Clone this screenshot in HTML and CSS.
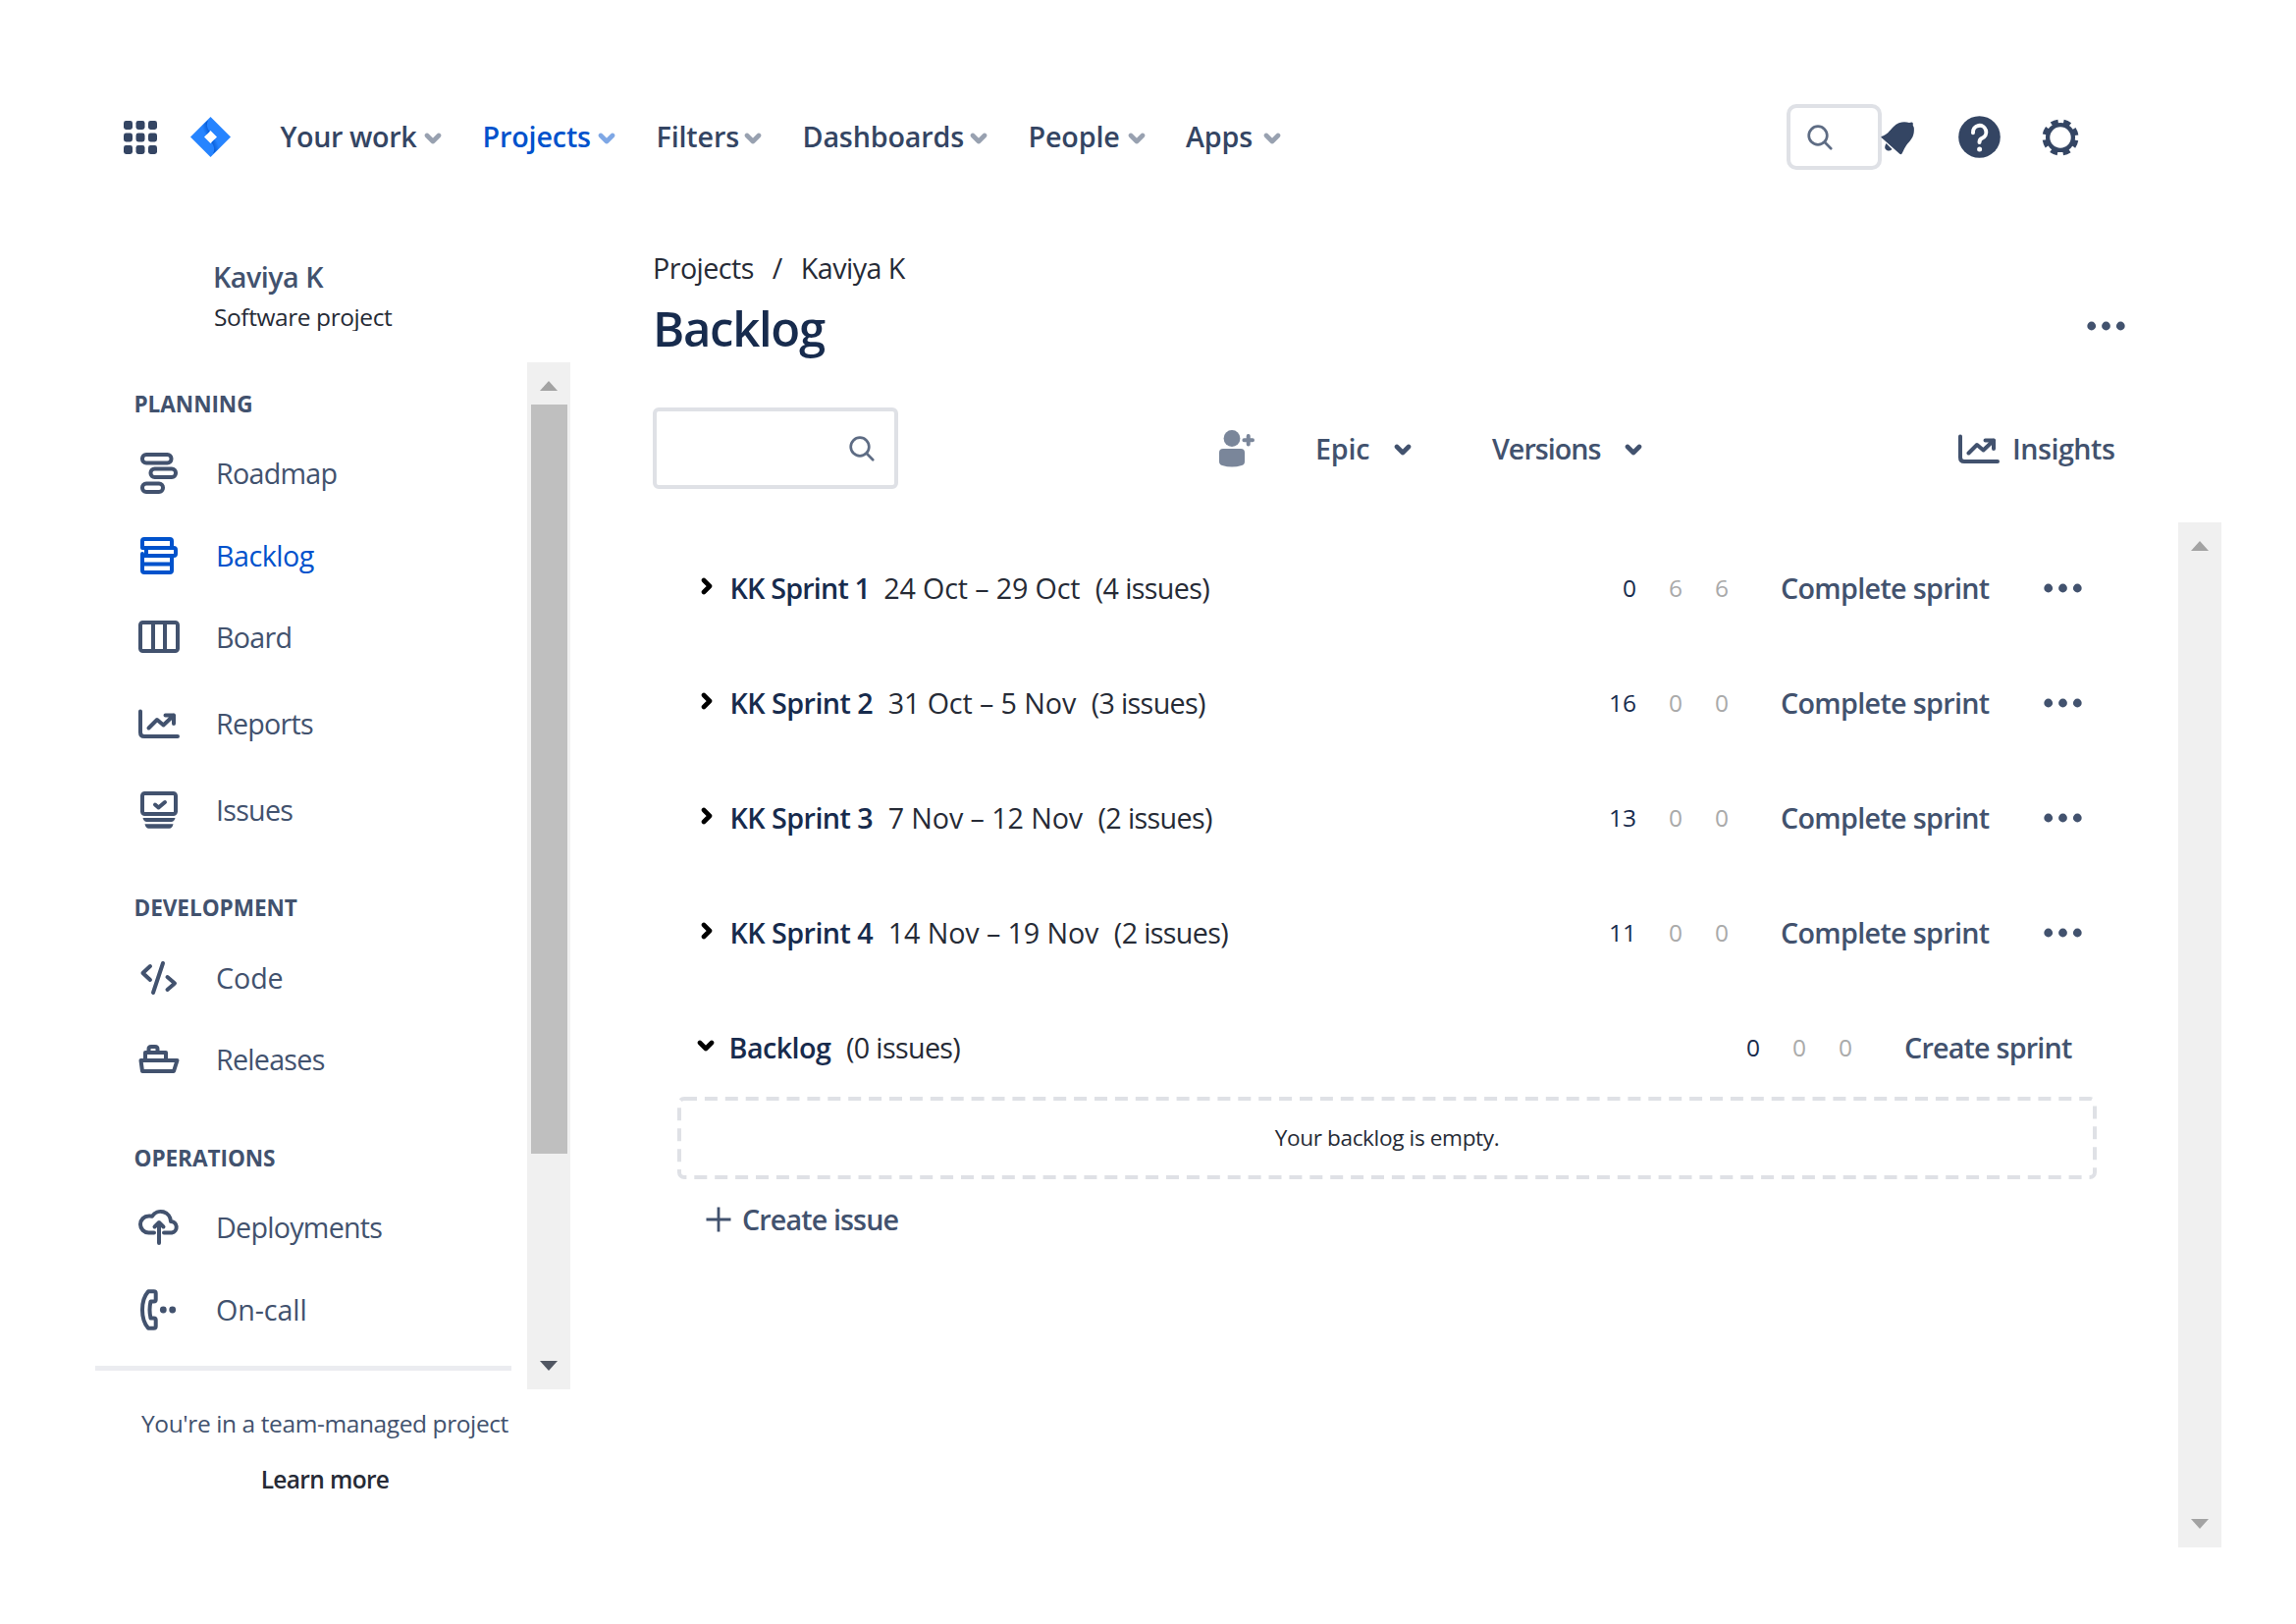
FILE: index.html
```html
<!DOCTYPE html>
<html lang="en">
<head>
<meta charset="utf-8">
<title>Backlog</title>
<link rel="stylesheet" href="styles.css">
</head>
<body>
<svg class="defs" width="0" height="0" aria-hidden="true">
  <symbol id="down" viewBox="0 0 18 12"><path d="M3 3l6 6 6-6"/></symbol>
  <symbol id="right" viewBox="0 0 12 18"><path d="M3 3l6 6-6 6"/></symbol>
  <symbol id="lens" viewBox="0 0 26 26"><circle cx="11" cy="11" r="9.3"/><path d="M17.8 17.8l6.4 6.4"/></symbol>
  <symbol id="chart" viewBox="0 0 42 42"><path d="M2 8.5V30q0 4 4 4h34M10.5 25.5L19 17l6.5 5.5L36 12.5M27.5 12.5H36V21"/></symbol>
  <symbol id="dots" viewBox="0 0 39 10"><circle cx="4.7" cy="5" r="4.4"/><circle cx="19.5" cy="5" r="4.4"/><circle cx="34.3" cy="5" r="4.4"/></symbol>
</svg>

<header class="topbar">
  <svg class="switcher" viewBox="0 0 34 34"><g id="r"><rect width="9" height="9" rx="2.4"/><rect x="12.5" width="9" height="9" rx="2.4"/><rect x="25" width="9" height="9" rx="2.4"/></g><use href="#r" y="12.5"/><use href="#r" y="25"/></svg>
  <svg class="logo" viewBox="0 0 41 41">
    <defs><linearGradient id="g" x1="1" y1="0.2" x2="0.1" y2="0.7"><stop offset="0.1" stop-color="#0052cc"/><stop offset="0.9" stop-color="#2684ff"/></linearGradient></defs>
    <path fill="#2684ff" fill-rule="evenodd" d="M20.5 0L41 20.5 20.5 41 0 20.5zM20.5 14L14 20.5l6.5 6.5 6.5-6.5z"/>
    <path id="f" fill="url(#g)" d="M18 3.500Q15 9 19.500 15L16.500 18 11 12.500Q11 9 18 3.500z"/>
    <use href="#f" transform="rotate(180 20.500 20.500)"/>
  </svg>
  <nav class="menu">
    <a class="menu-item first"><span>Your work</span><svg class="chev"><use href="#down"/></svg></a>
    <a class="menu-item current"><span>Projects</span><svg class="chev"><use href="#down"/></svg></a>
    <a class="menu-item"><span>Filters</span><svg class="chev"><use href="#down"/></svg></a>
    <a class="menu-item"><span>Dashboards</span><svg class="chev"><use href="#down"/></svg></a>
    <a class="menu-item"><span>People</span><svg class="chev"><use href="#down"/></svg></a>
    <a class="menu-item"><span>Apps</span><svg class="chev"><use href="#down"/></svg></a>
  </nav>
  <div class="top-search"><svg class="lens"><use href="#lens"/></svg></div>
  <svg class="bell" viewBox="0 0 42 42"><path d="M4.500 20C11 18 12 15 17 10C22 4.500 29 4.500 33 6L35.500 5.500Q37.300 5.500 36.700 8.500L37.800 11C38.500 19 35.500 22.500 32.500 26C28.500 30.500 28 33 25.500 37.500Q24.500 39 23 37.500L4.500 21zM9.500 27Q6.500 32 10 34Q13 35.500 15.500 33z"/></svg>
  <svg class="help" viewBox="0 0 43 43"><circle cx="21.500" cy="21.500" r="21.300"/><path d="M15 17.200A6.700 6.700 0 1 1 24 22.800Q21.500 24 21.500 27"/><circle class="pt" cx="21.600" cy="34" r="2.500"/></svg>
  <svg class="gear" viewBox="0 0 38 38"><circle cx="19" cy="19" r="12.900" stroke-width="4.300"/><circle cx="19" cy="19" r="16.400" stroke-width="4.200" stroke-dasharray="7.200 5.680" transform="rotate(9.900 19 19)"/></svg>
</header>

<div class="page">
  <aside class="sidebar">
    <div class="project"><div class="project-name">Kaviya K</div><div class="project-type">Software project</div></div>
    <div class="side-scroll">
      <div class="side-list">
        <h2 class="group">PLANNING</h2>
        <a class="item"><svg viewBox="0 0 42 42"><rect x="4" y="2" width="29.500" height="8.500" rx="4"/><rect x="12.500" y="16.500" width="25.500" height="8.500" rx="4"/><rect x="4" y="31.500" width="21" height="8.500" rx="4"/></svg><span>Roadmap</span></a>
        <a class="item active"><svg viewBox="0 0 42 42"><path d="M8 13H4V6q0-2 2-2h26q2 0 2 2v7"/><rect x="8" y="13" width="30" height="8" rx="2"/><path d="M4 19v17q0 2 2 2h26q2 0 2-2V21M4 21h4M4 29.500h30"/></svg><span>Backlog</span></a>
        <a class="item"><svg viewBox="0 0 42 42"><rect x="2" y="6" width="38" height="29" rx="2.500"/><path d="M15 6v29M27 6v29"/></svg><span>Board</span></a>
        <a class="item low"><svg><use href="#chart"/></svg><span>Reports</span></a>
        <a class="item low"><svg viewBox="0 0 42 42"><rect x="4" y="4" width="34" height="21" rx="2.500"/><path d="M17 15.500l3.500 3L27 13"/><path class="solid" d="M4.500 29h33q-1 4-4 4h-25q-3 0-4-4zM6.500 35.300h29q-1 4.400-4 4.400h-21q-3 0-4-4.400z"/></svg><span>Issues</span></a>
        <h2 class="group">DEVELOPMENT</h2>
        <a class="item wide"><svg viewBox="0 0 42 42"><path d="M12 9l-7.500 7 7.500 7M25 6L15 36M29.500 20l7.500 6.500-7.500 6.500"/></svg><span>Code</span></a>
        <a class="item"><svg viewBox="0 0 42 42"><path d="M2.500 22h37L36 33H4zM7 21v-7h21v7M10.500 13v-2.500q0-2.500 2.500-2.500h4q2.500 0 2.500 2.500V13"/></svg><span>Releases</span></a>
        <h2 class="group">OPERATIONS</h2>
        <a class="item"><svg viewBox="0 0 42 42"><path d="M16 26.500h-5.500A8.500 8.500 0 0 1 10.500 9.500Q12.500 9.300 14 9.700A10.300 10.300 0 0 1 33 15A5.800 5.800 0 0 1 34 26.500h-8M21 37V16.500M16.500 20.500L21 16l4.500 4.500"/></svg><span>Deployments</span></a>
        <a class="item wide"><svg viewBox="0 0 42 42"><path d="M10 2.300h5.700q2 0 2 2V10.500q0 2-2 2H12.500q-2 8.500 0 17h3.200q2 0 2 2v6.200q0 2-2 2H10Q4 33 4 21T10 2.300z"/><circle class="solid" cx="25.300" cy="21" r="3.400"/><circle class="solid" cx="34.700" cy="21" r="3.400"/></svg><span>On-call</span></a>
        <div class="rule"></div>
      </div>
      <div class="scrollbar"><i class="up"></i><i class="thumb"></i><i class="dn dark"></i></div>
    </div>
    <div class="side-foot"><div class="managed">You're in a team-managed project</div><div class="learn">Learn more</div></div>
  </aside>

  <main class="main">
    <div class="crumbs"><span>Projects</span><span>/</span><span>Kaviya K</span></div>
    <div class="title-row"><h1>Backlog</h1><svg class="dots"><use href="#dots"/></svg></div>
    <div class="toolbar">
      <div class="search"><svg class="lens"><use href="#lens"/></svg></div>
      <svg class="person" viewBox="0 0 37 38"><circle cx="13" cy="8.500" r="8.400"/><path d="M4 19h18q4 0 4 4v9q0 3-3 4-10 3-20 0-3-1-3-4v-9q0-4 4-4z"/><path class="plus" d="M29.700 6v8.600M25.400 10.300H34"/></svg>
      <a class="filter epic"><span>Epic</span><svg class="chev"><use href="#down"/></svg></a>
      <a class="filter versions"><span>Versions</span><svg class="chev"><use href="#down"/></svg></a>
      <a class="insights"><svg><use href="#chart"/></svg><span>Insights</span></a>
    </div>
    <div class="board">
      <div class="lists">
        <section class="sprint"><svg class="fold"><use href="#right"/></svg><b>KK Sprint 1</b><span class="date">24 Oct – 29 Oct</span><span class="count">(4 issues)</span><div class="nums"><em>0</em><i>6</i><i>6</i></div><a class="act">Complete sprint</a><svg class="dots"><use href="#dots"/></svg></section>
        <section class="sprint"><svg class="fold"><use href="#right"/></svg><b>KK Sprint 2</b><span class="date">31 Oct – 5 Nov</span><span class="count">(3 issues)</span><div class="nums"><em>16</em><i>0</i><i>0</i></div><a class="act">Complete sprint</a><svg class="dots"><use href="#dots"/></svg></section>
        <section class="sprint"><svg class="fold"><use href="#right"/></svg><b>KK Sprint 3</b><span class="date">7 Nov – 12 Nov</span><span class="count">(2 issues)</span><div class="nums"><em>13</em><i>0</i><i>0</i></div><a class="act">Complete sprint</a><svg class="dots"><use href="#dots"/></svg></section>
        <section class="sprint"><svg class="fold"><use href="#right"/></svg><b>KK Sprint 4</b><span class="date">14 Nov – 19 Nov</span><span class="count">(2 issues)</span><div class="nums"><em>11</em><i>0</i><i>0</i></div><a class="act">Complete sprint</a><svg class="dots"><use href="#dots"/></svg></section>
        <section class="sprint last"><svg class="fold open"><use href="#down"/></svg><b>Backlog</b><span class="count">(0 issues)</span><div class="nums"><em>0</em><i>0</i><i>0</i></div><a class="act create">Create sprint</a></section>
        <div class="empty"><svg class="dash"><rect x="2" y="2" width="1442" height="80" rx="5"/></svg><span>Your backlog is empty.</span></div>
        <a class="new"><svg viewBox="0 0 26 26"><path d="M13 .5v25M.5 13h25"/></svg><span>Create issue</span></a>
      </div>
      <div class="scrollbar"><i class="up"></i><i class="dn"></i></div>
    </div>
  </main>
</div>
</body>
</html>
```
FILE: styles.css
```css
* { box-sizing: border-box; }
body { margin: 0; width: 2339px; height: 1654px; overflow: hidden; background: #fff; color: #262b36; font-family: "Open Sans", "Noto Sans", sans-serif; font-size: 28.7px; line-height: 40px; }
h1, h2 { margin: 0; }
i, em { font-style: normal; }
svg { display: block; flex: none; overflow: visible; }
.defs { position: absolute; }
a, b { white-space: nowrap; font-weight: 600; }

/* top navigation */
.topbar { display: flex; align-items: center; height: 173px; padding: 106px 0 0 126px; color: #344563; fill: #344563; }
.switcher { width: 34px; height: 34px; }
.logo { width: 41px; height: 41px; margin-left: 33.5px; }
.menu { display: grid; grid-template-columns: 164.5px 135.5px 107.5px 188.5px 119px 96.5px; gap: 41.5px; width: 1022px; margin: -2px 0 0 51px; letter-spacing: -.15px; }
.menu-item { display: flex; align-items: center; justify-content: space-between; }
.menu-item.first { letter-spacing: -.4px; }
.chev { width: 18px; height: 12px; fill: none; stroke: currentColor; stroke-width: 4.6; stroke-linecap: round; stroke-linejoin: round; }
.menu-item .chev { opacity: .5; margin-top: 4px; }
.menu-item.current { color: #0052cc; }
.top-search { width: 97px; height: 67px; border: 4.2px solid #dfe1e6; border-radius: 10px; margin-left: 512.5px; padding: 17px 0 0 17px; }
.lens { width: 26px; height: 26px; fill: none; stroke: #5e6c84; stroke-width: 2.7; stroke-linecap: round; }
.bell { width: 42px; height: 42px; margin-left: -5px; }
.help { width: 43px; height: 43px; margin-left: 41px; }
.help path { fill: none; stroke: #fff; stroke-width: 4; stroke-linecap: round; }
.help .pt { fill: #fff; }
.gear { width: 38px; height: 38px; margin-left: 42px; fill: none; stroke: #344563; }

/* project sidebar */
.page { display: flex; height: 1481px; }
.sidebar { width: 581px; color: #42526e; }
.project { height: 196px; padding: 89px 0 0 217px; }
.project-name { font-weight: 600; letter-spacing: -.5px; }
.project-type { height: 30.5px; margin-top: 4.5px; padding-left: 1px; overflow: hidden; font-size: 24.5px; line-height: 32px; letter-spacing: -.42px; color: #262b36; }
.side-scroll { display: flex; height: 1046px; }
.side-list { width: 537px; padding-top: 26.5px; }
.group { padding-left: 136.5px; margin-bottom: 13px; font-size: 22.6px; font-weight: 700; line-height: 32px; letter-spacing: -.07px; }
.item + .group { margin-top: 42.5px; }
.item { display: flex; align-items: center; height: 83.6px; padding-left: 141px; gap: 37px; font-weight: 400; letter-spacing: -.75px; }
.item.low { margin-top: 4px; }
.item.wide { letter-spacing: -.1px; }
.item svg, .insights svg { width: 42px; height: 42px; fill: none; stroke: currentColor; stroke-width: 4; stroke-linecap: round; stroke-linejoin: round; }
.item .solid { fill: currentColor; stroke: none; }
.item.active { color: #0052cc; letter-spacing: -.5px; }
.rule { width: 424px; height: 5px; margin: 15px 0 0 97px; background: #ebecf0; }
.scrollbar { display: flex; flex-direction: column; align-items: center; width: 44px; background: #f0f0f0; }
.up, .dn { border: 9px solid transparent; border-top-width: 0; border-bottom: 10px solid #a3a3a3; margin: 19px 0 14px; }
.dn { transform: rotate(180deg); margin: auto 0 19px; }
.dark { border-bottom-color: #505662; }
.thumb { width: 37px; height: 763px; background: #bfbfbf; }
.side-foot { padding: 18.5px 0 0 81px; text-align: center; font-size: 24.5px; line-height: 32px; letter-spacing: -.4px; }
.learn { margin-top: 25px; font-weight: 600; letter-spacing: -.65px; color: #262b36; }

/* backlog page */
.main { width: 1682px; padding: 80px 0 0 84px; }
.crumbs { display: flex; gap: 19px; letter-spacing: -.55px; }
.title-row { display: flex; align-items: center; height: 64px; margin-top: 9px; }
h1 { width: 1461px; font-size: 49px; font-weight: 600; line-height: 64px; letter-spacing: -1.3px; color: #172b4d; }
.title-row .dots { margin-top: -5px; }
.dots { width: 39px; height: 10px; fill: #42526e; }
.toolbar { display: flex; align-items: center; height: 83px; margin-top: 49px; color: #42526e; }
.search { width: 250px; height: 83px; border: 4px solid #dfe1e6; border-radius: 6px; padding: 25px 0 0 196px; }
.person { width: 37px; height: 38px; margin-left: 327px; fill: #7a869a; }
.plus { stroke: #7a869a; stroke-width: 4; stroke-linecap: round; }
.filter { display: flex; align-items: center; justify-content: space-between; height: 40px; }
.filter .chev { margin-top: 3px; }
.epic { width: 98px; margin-left: 61px; letter-spacing: -.2px; }
.versions { width: 153px; margin-left: 82px; letter-spacing: -1px; }
.insights { display: flex; align-items: center; gap: 13px; margin-left: 322px; letter-spacing: -.5px; }
.board { display: flex; height: 1044px; margin-top: 33.5px; }
.lists { width: 1446px; margin: 0 83px 0 25px; padding-top: 32px; }
.sprint { display: flex; align-items: center; height: 70px; margin-bottom: 47px; padding-right: 15px; }
.sprint.last { margin-bottom: 15.4px; padding-right: 25px; }
.fold { width: 12px; height: 18px; margin: -4px 17px 0 24px; fill: none; stroke: #000; stroke-width: 4.6; stroke-linecap: round; stroke-linejoin: round; }
.fold.open { width: 18px; height: 12px; margin: -3px 14px 0 20px; }
.sprint b { margin-left: .5px; color: #172b4d; letter-spacing: -.53px; }
.sprint:first-child b { letter-spacing: -.8px; }
.date, .count { margin-left: 15.5px; white-space: nowrap; letter-spacing: -.1px; }
.sprint:first-child .date { margin-left: 14px; letter-spacing: -.15px; }
.count { letter-spacing: -.65px; }
.nums { display: flex; gap: 17px; margin-left: auto; padding-top: 1px; font-size: 24.5px; text-align: right; color: #aaa; }
.nums > * { width: 30px; }
.nums em { color: #172b4d; }
.act { width: 213px; margin: 0 55px 0 53px; color: #42526e; letter-spacing: -.67px; }
.act.create { width: 171px; margin-right: 0; letter-spacing: -.8px; }
.empty { position: relative; display: flex; align-items: center; justify-content: center; height: 84px; padding-top: 1px; font-size: 22.6px; letter-spacing: -.37px; }
.dash { position: absolute; left: 0; top: 0; width: 1446px; height: 84px; fill: none; stroke: #dfe1e6; stroke-width: 4; stroke-dasharray: 13 7.9; }
.new { display: flex; align-items: center; gap: 11px; height: 50px; margin: 16px 0 0 29px; color: #42526e; letter-spacing: -.88px; }
.new svg { width: 26px; height: 26px; stroke: #42526e; stroke-width: 2.8; }
```
